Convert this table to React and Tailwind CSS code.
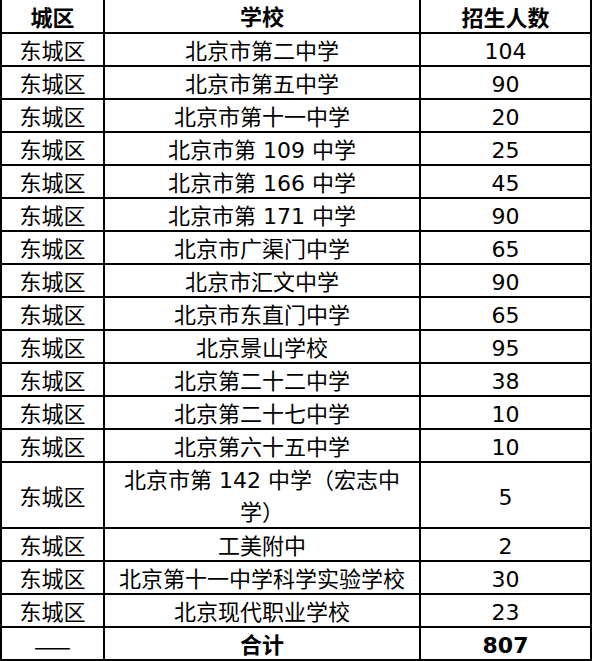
const rows = [
  ['北京市第二中学', '104'],
  ['北京市第五中学', '90'],
  ['北京市第十一中学', '20'],
  ['北京市第 109 中学', '25'],
  ['北京市第 166 中学', '45'],
  ['北京市第 171 中学', '90'],
  ['北京市广渠门中学', '65'],
  ['北京市汇文中学', '90'],
  ['北京市东直门中学', '65'],
  ['北京景山学校', '95'],
  ['北京第二十二中学', '38'],
  ['北京第二十七中学', '10'],
  ['北京第六十五中学', '10'],
]

const rowsAfter = [
  ['工美附中', '2'],
  ['北京第十一中学科学实验学校', '30'],
  ['北京现代职业学校', '23'],
]

const Row = ({ a, b, c, bold, tall, first }) => (
  <div className={`flex border-b-2 border-black ${first ? 'h-[34px]' : tall ? 'h-[66px]' : 'h-[33px]'} ${bold ? 'font-bold' : ''}`}>
    <div className="flex w-[103px] items-center justify-center border-r-2 border-black pt-1">{a}</div>
    <div className="flex w-[316px] items-center justify-center whitespace-nowrap border-r-2 border-black pt-1 text-center leading-[32px]">{b}</div>
    <div className="flex w-[171px] items-center justify-center border-r-2 border-black pt-1">{c}</div>
  </div>
)

export default function App() {
  return (
    <div className="h-[661px] w-[593px] bg-white">
      <div
        className="w-[592px] border-l-2 border-black text-[22px] text-black"
        style={{ fontFamily: '"DejaVu Sans", "Noto Sans CJK SC", sans-serif' }}
      >
        <Row a="城区" b="学校" c="招生人数" bold first />
        {rows.map(([s, n]) => (
          <Row key={s} a="东城区" b={s} c={n} />
        ))}
        <Row
          a="东城区"
          b={
            <span>
              北京市第 142 中学（宏志中
              <br />
              学）
            </span>
          }
          c="5"
          tall
        />
        {rowsAfter.map(([s, n]) => (
          <Row key={s} a="东城区" b={s} c={n} />
        ))}
        <div className="flex h-[33px] border-b-2 border-black">
          <div
            className="flex w-[103px] items-center justify-center border-r-2 border-black pt-1"
            style={{ fontFamily: '"Noto Sans CJK SC", sans-serif' }}
          >
            ——
          </div>
          <div className="flex w-[316px] items-center justify-center border-r-2 border-black pt-1 font-bold">合计</div>
          <div className="flex w-[171px] items-center justify-center border-r-2 border-black pt-1 font-bold">807</div>
        </div>
      </div>
    </div>
  )
}
